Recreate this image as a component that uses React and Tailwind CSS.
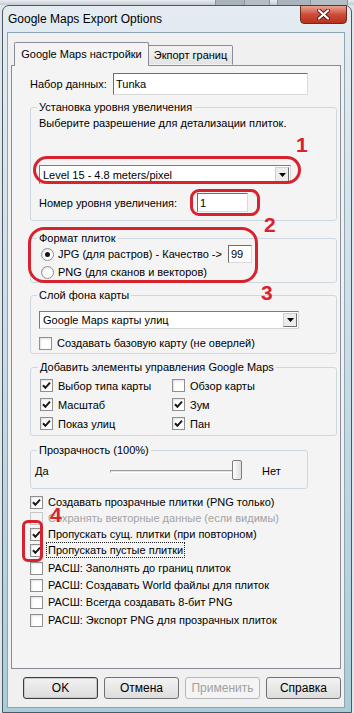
const ui = "font-['Liberation_Sans',Arial,sans-serif] text-[11px] leading-[14px] text-black";

function Check({ checked, disabled }) {
    return (
        <span
            className={`flex h-[13px] w-[13px] shrink-0 items-center justify-center border ${
                disabled
                    ? "border-[#c6c6c6] bg-[#f5f5f5]"
                    : "border-[#8e8f8f] bg-white shadow-[inset_1px_1px_2px_rgba(0,0,0,0.12)]"
            }`}
        >
            {checked && (
                <svg width="11" height="11" viewBox="0 0 11 11">
                    <path d="M2 5.2 L4.4 7.8 L9 2.6" fill="none" stroke="#1a1a1a" strokeWidth="2" />
                </svg>
            )}
        </span>
    );
}

function Radio({ checked }) {
    return (
        <span className="flex h-[13px] w-[13px] shrink-0 items-center justify-center rounded-full border border-[#8e8f8f] bg-white shadow-[inset_1px_1px_2px_rgba(0,0,0,0.12)]">
            {checked && <span className="h-[5px] w-[5px] rounded-full bg-[#151515]" />}
        </span>
    );
}

function Combo({ value, className }) {
    return (
        <div className={`flex items-center border border-[#7b7b7b] border-r-[#d6d6d6] border-b-[#d6d6d6] bg-white ${className}`}>
            <span className="flex-1 truncate pl-[3px]">{value}</span>
            <span className="mr-px flex h-[calc(100%-2px)] w-[14px] items-center justify-center border border-[#d0d0d0] border-r-[#6f6f6f] border-b-[#6f6f6f] bg-[#ececec]">
                <svg width="7" height="4" viewBox="0 0 7 4">
                    <path d="M0 0 H7 L3.5 4 Z" fill="#000" />
                </svg>
            </span>
        </div>
    );
}

function Field({ value, className }) {
    return (
        <div className={`flex items-center border border-[#6e6e6e] border-r-[#dadada] border-b-[#dadada] bg-white pl-[2px] ${className}`}>
            {value}
        </div>
    );
}

function Group({ title, className, legendClass = "ml-[-2px]", children }) {
    return (
        <fieldset className={`rounded-[3px] border border-[#cfd8de] ${className}`}>
            <legend className={`px-[2px] leading-[14px] ${legendClass}`}>{title}</legend>
            {children}
        </fieldset>
    );
}

function CheckRow({ label, checked, disabled, focus, className = "" }) {
    return (
        <div className={`flex h-[16px] items-center ${className}`}>
            <Check checked={checked} disabled={disabled} />
            <span
                className={`ml-[4px] whitespace-nowrap px-px ${disabled ? "text-[#a3a3a3]" : ""} ${
                    focus ? "outline outline-1 outline-dotted outline-[#222]" : ""
                }`}
            >
                {label}
            </span>
        </div>
    );
}

function Button({ children, primary, disabled }) {
    return (
        <div
            className={`flex h-[22px] w-[75px] items-center justify-center rounded-[3px] border text-[12px] ${
                disabled
                    ? "border-[#b5b9bc] bg-[#f4f4f4] text-[#a0a0a0]"
                    : primary
                      ? "border-[#3c3c3c] bg-linear-to-b from-[#f2f2f2] to-[#dcdcdc] shadow-[inset_0_0_0_1px_#c8c8c8]"
                      : "border-[#707070] bg-linear-to-b from-[#f3f3f3] to-[#dddddd]"
            }`}
        >
            {children}
        </div>
    );
}

function Mark({ className }) {
    return <div className={`pointer-events-none absolute border-[3px] border-[#d8232e] ${className}`} />;
}

function Num({ children, className }) {
    return (
        <span className={`pointer-events-none absolute font-['Liberation_Sans',Arial,sans-serif] text-[21px] font-bold leading-none text-[#d8232e] ${className}`}>
            {children}
        </span>
    );
}

export default function App() {
    return (
        <div className={`relative h-[713px] w-[354px] overflow-hidden bg-[#dfe5e9] ${ui}`}>
            {/* strip of the window behind */}
            <div className="flex h-[5px] bg-linear-to-b from-[#e9edf0] to-[#c2cbd1]">
                <div className="ml-[215px] w-[30px] border-x border-[#8b959c] bg-[#a9b3ba]" />
                <div className="w-[25px] border-r border-[#8b959c] bg-[#b5bec4]" />
                <div className="ml-[7px] w-[34px] border-x border-[#8b959c] bg-[#a9b3ba]" />
                <div className="w-[37px] border-r border-[#8b959c] bg-[#b5bec4]" />
            </div>

            <div className="mx-[2px] flex h-[708px] flex-col rounded-t-[7px] border border-[#4b5a66] bg-linear-to-b from-[#e4ecf2] via-[#c9dce7] to-[#a9cdd8]">
                {/* title bar */}
                <div className="flex h-[26px] items-center justify-between">
                    <span className="ml-[5px] text-[12px] leading-none">Google Maps Export Options</span>
                    <div className="mr-[4px] mt-[-1px] flex h-[19px] w-[47px] items-center justify-center self-start rounded-b-[4px] border border-[#6e2b22] bg-linear-to-b from-[#e8a395] via-[#cd4c39] to-[#b9301b]">
                        <svg width="13" height="11" viewBox="0 0 13 11">
                            <path d="M2 1.5 L11 9.5 M11 1.5 L2 9.5" stroke="#5a1c14" strokeWidth="4" strokeLinecap="round" />
                            <path d="M2 1.5 L11 9.5 M11 1.5 L2 9.5" stroke="#fff" strokeWidth="2.2" strokeLinecap="round" />
                        </svg>
                    </div>
                </div>

                {/* client area */}
                <div className="ml-[4px] h-[676px] w-[338px] border border-[#8fa3b1] bg-[#f0f0f0] pt-[9px]">
                    <div className="ml-[6px] flex h-[23px] items-end">
                        <div className="relative z-10 -mb-px flex h-[24px] w-[135px] items-start justify-center rounded-t-[2px] border border-b-0 border-[#898c95] bg-[#f4f4f4] pt-[4px]">
                            Google Maps настройки
                        </div>
                        <div className="flex h-[20px] w-[84px] items-center justify-center rounded-tr-[2px] border-y border-r border-[#898c95] border-b-transparent bg-linear-to-b from-[#f3f3f3] to-[#e3e3e3]">
                            Экпорт границ
                        </div>
                    </div>

                    {/* tab panel */}
                    <div className="ml-[3px] h-[604px] w-[330px] border border-[#898c95] bg-[#f4f4f4] pl-[18px] pt-[7px]">
                        <div className="flex h-[22px] items-center">
                            <span className="w-[83px]">Набор данных:</span>
                            <Field value="Tunka" className="h-[22px] w-[195px]" />
                        </div>

                        <Group title="Установка уровня увеличения" className="mt-[5px] h-[121px] w-[307px] pl-[8px]">
                            <div className="mt-[2px]">Выберите разрешение для детализации плиток.</div>
                            <Combo value="Level 15 - 4.8 meters/pixel" className="mt-[35px] h-[19px] w-[252px]" />
                            <div className="mt-[9px] flex h-[19px] items-center">
                                <span className="w-[158px]">Номер уровня увеличения:</span>
                                <Field value="1" className="h-[19px] w-[51px]" />
                            </div>
                        </Group>

                        <Group title="Формат плиток" className="mt-[10px] h-[52px] w-[307px] pl-[8px]">
                            <div className="flex h-[18px] items-center pl-[2px]">
                                <Radio checked />
                                <span className="ml-[4px] w-[170px]">JPG (для растров) - Качество -&gt;</span>
                                <Field value="99" className="h-[18px] w-[24px]" />
                            </div>
                            <div className="flex h-[18px] items-center pl-[2px]">
                                <Radio />
                                <span className="ml-[4px]">PNG (для сканов и векторов)</span>
                            </div>
                        </Group>

                        <Group title="Слой фона карты" className="mt-[5px] h-[66px] w-[307px] pl-[8px]">
                            <Combo value="Google Maps карты улиц" className="mt-[9px] h-[18px] w-[260px]" />
                            <CheckRow label="Создавать базовую карту (не оверлей)" className="mt-[6px]" />
                        </Group>

                        <Group title="Добавить элементы управления Google Maps" className="mt-[6px] h-[76px] w-[307px] pl-[9px]">
                            <div className="mt-[2px] grid grid-cols-[132px_1fr] [&>div]:h-[19px]">
                                <CheckRow label="Выбор типа карты" checked />
                                <CheckRow label="Обзор карты" />
                                <CheckRow label="Масштаб" checked />
                                <CheckRow label="Зум" checked />
                                <CheckRow label="Показ улиц" checked />
                                <CheckRow label="Пан" checked />
                            </div>
                        </Group>

                        <Group title="Прозрачность (100%)" className="mt-[7px] h-[46px] w-[278px] pl-[4px]" legendClass="ml-[2px]">
                            <div className="mt-[2px] flex h-[24px] items-center">
                                <span className="w-[75px]">Да</span>
                                <div className="relative h-[24px] w-[132px]">
                                    <div className="absolute left-0 right-0 top-[11px] h-[3px] border border-[#9a9a9a] border-b-white border-r-white bg-[#e6e6e6]" />
                                    <div className="absolute left-[122px] top-[1px] h-[20px] w-[10px] rounded-[2px] border border-[#7d7d7d] bg-linear-to-r from-[#fdfdfd] to-[#dedede]" />
                                </div>
                                <span className="ml-[20px]">Нет</span>
                            </div>
                        </Group>

                        <CheckRow label="Создавать прозрачные плитки (PNG только)" checked className="mt-[5px]" />
                        <CheckRow label="Сохранять векторные данные (если видимы)" disabled />
                        <CheckRow label="Пропускать сущ. плитки (при повторном)" checked />
                        <CheckRow label="Пропускать пустые плитки" checked focus />
                        <CheckRow label="РАСШ: Заполнять до границ плиток" className="mt-[2px]" />
                        <CheckRow label="РАСШ: Создавать World файлы для плиток" className="mt-px" />
                        <CheckRow label="РАСШ: Всегда создавать 8-бит PNG" className="mt-px" />
                        <CheckRow label="РАСШ: Экспорт PNG для прозрачных плиток" className="mt-[2px]" />
                    </div>

                    <div className="ml-[15px] mt-[8px] flex gap-[6px]">
                        <Button primary>OK</Button>
                        <Button>Отмена</Button>
                        <Button disabled>Применить</Button>
                        <Button>Справка</Button>
                    </div>
                </div>
            </div>

            {/* red annotations drawn over the dialog */}
            <Mark className="left-[33px] top-[156px] h-[28px] w-[268px] rounded-[14px]" />
            <Num className="left-[296px] top-[134px]">1</Num>
            <Mark className="left-[190px] top-[189px] h-[27px] w-[70px] rounded-[9px]" />
            <Num className="left-[264px] top-[214px]">2</Num>
            <Mark className="left-[28px] top-[227px] h-[56px] w-[230px] rounded-[16px]" />
            <Num className="left-[261px] top-[282px]">3</Num>
            <Mark className="left-[22px] top-[520px] h-[42px] w-[21px] rounded-[6px]" />
            <Num className="left-[50px] top-[504px]">4</Num>
        </div>
    );
}
